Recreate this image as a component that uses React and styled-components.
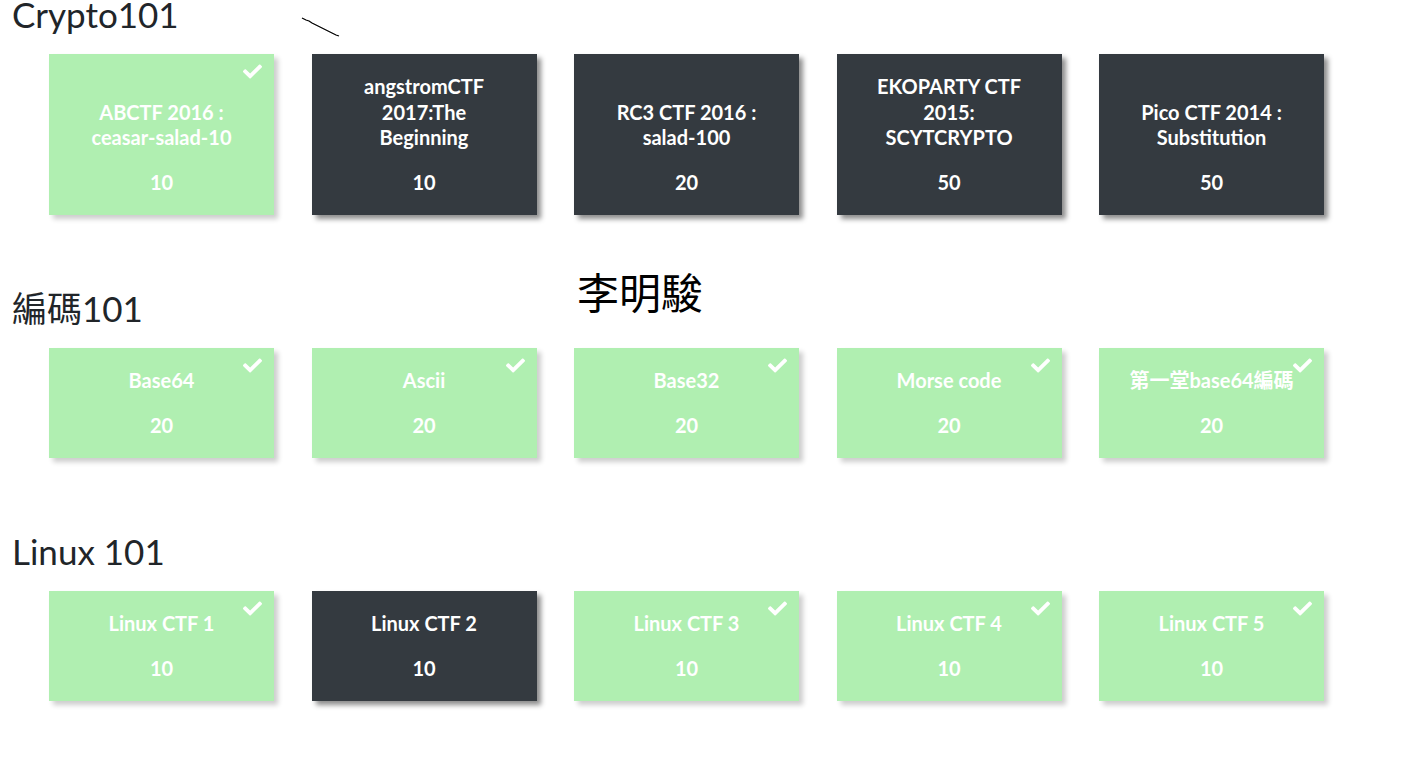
import React from "react";
import styled, { createGlobalStyle } from "styled-components";

const GlobalStyle = createGlobalStyle`
  html, body {
    margin: 0;
    padding: 0;
    background: #ffffff;
    font-family: Lato, "Noto Sans CJK TC", sans-serif;
  }
`;

const sections = [
  {
    name: "Crypto101",
    items: [
      { title: "ABCTF 2016 : ceasar-salad-10", points: 10, solved: true },
      { title: "angstromCTF 2017:The Beginning", points: 10 },
      { title: "RC3 CTF 2016 : salad-100", points: 20 },
      { title: "EKOPARTY CTF 2015: SCYTCRYPTO", points: 50 },
      { title: "Pico CTF 2014 : Substitution", points: 50 }
    ]
  },
  {
    name: "編碼101",
    items: [
      { title: "Base64", points: 20, solved: true },
      { title: "Ascii", points: 20, solved: true },
      { title: "Base32", points: 20, solved: true },
      { title: "Morse code", points: 20, solved: true },
      { title: "第一堂base64編碼", points: 20, solved: true }
    ]
  },
  {
    name: "Linux 101",
    items: [
      { title: "Linux CTF 1", points: 10, solved: true },
      { title: "Linux CTF 2", points: 10 },
      { title: "Linux CTF 3", points: 10, solved: true },
      { title: "Linux CTF 4", points: 10, solved: true },
      { title: "Linux CTF 5", points: 10, solved: true }
    ]
  }
];

function Check() {
  return (
    <CheckMark viewBox="0 0 512 512" aria-hidden="true">
      <path d="M173.9 439.4 7.5 273c-10-10-10-26.2 0-36.2l36.2-36.2c10-10 26.2-10 36.2 0L192 312.7 432.1 72.6c10-10 26.2-10 36.2 0l36.2 36.2c10 10 10 26.2 0 36.2L210.1 439.4c-10 10-26.2 10-36.2 0z" />
    </CheckMark>
  );
}

function App() {
  return (
    <Page>
      <GlobalStyle />
      <Scribble viewBox="0 0 40 22" aria-hidden="true">
        <path d="M1 1 L5 3 L8 4 L11 6 L15 8 L19 10 L23 12 L27 14 L31 16 L35 18 L38 19" />
      </Scribble>
      <Owner>李明駿</Owner>
      {sections.map(({ name, items }) => (
        <Section key={name}>
          <Heading>{name}</Heading>
          <Grid>
            {items.map(({ title, points, solved }) => (
              <Card key={title} $solved={solved}>
                {solved && <Check />}
                <Title>{title}</Title>
                <Points>{points}</Points>
              </Card>
            ))}
          </Grid>
        </Section>
      ))}
    </Page>
  );
}

const Page = styled.div`
  position: relative;
  min-height: 777px;
  padding: 0 12px;
  display: flex;
  flex-direction: column;
  gap: 79px;
`;

const Scribble = styled.svg`
  position: absolute;
  left: 301px;
  top: 17px;
  width: 40px;
  height: 22px;

  path {
    fill: none;
    stroke: #000;
    stroke-width: 1.3;
  }
`;

const Owner = styled.div`
  position: absolute;
  left: 577px;
  top: 267px;
  font-family: "Noto Sans CJK TC", sans-serif;
  font-size: 42px;
  line-height: 48px;
  color: #000;
`;

const Section = styled.section`
  display: flex;
  flex-direction: column;
  gap: 25px;
`;

const Heading = styled.h2`
  margin: 0;
  font-family: Lato, "Noto Sans CJK TC", sans-serif;
  font-weight: 400;
  font-size: 35px;
  line-height: 29px;
  color: #212529;
`;

const Grid = styled.div`
  display: grid;
  grid-template-columns: repeat(5, 225px);
  column-gap: 37.5px;
  padding-left: 37px;
`;

const Card = styled.div`
  position: relative;
  display: flex;
  flex-direction: column;
  justify-content: flex-end;
  gap: 19px;
  padding: 20px 25px;
  background: ${({ $solved }) => ($solved ? "#b0efb1" : "#343a40")};
  box-shadow: 4px 4px 5px rgba(0, 0, 0, ${({ $solved }) => ($solved ? 0.2 : 0.45)});
  color: #fff;
  text-align: center;
  font-family: Lato, "Noto Sans CJK TC", sans-serif;
  font-weight: 700;
  font-size: 20px;
  line-height: 25.5px;
`;

const Title = styled.div``;

const Points = styled.div``;

const CheckMark = styled.svg`
  position: absolute;
  top: 8px;
  right: 12px;
  width: 19px;
  height: 19px;
  fill: #fff;
`;

export default App;
